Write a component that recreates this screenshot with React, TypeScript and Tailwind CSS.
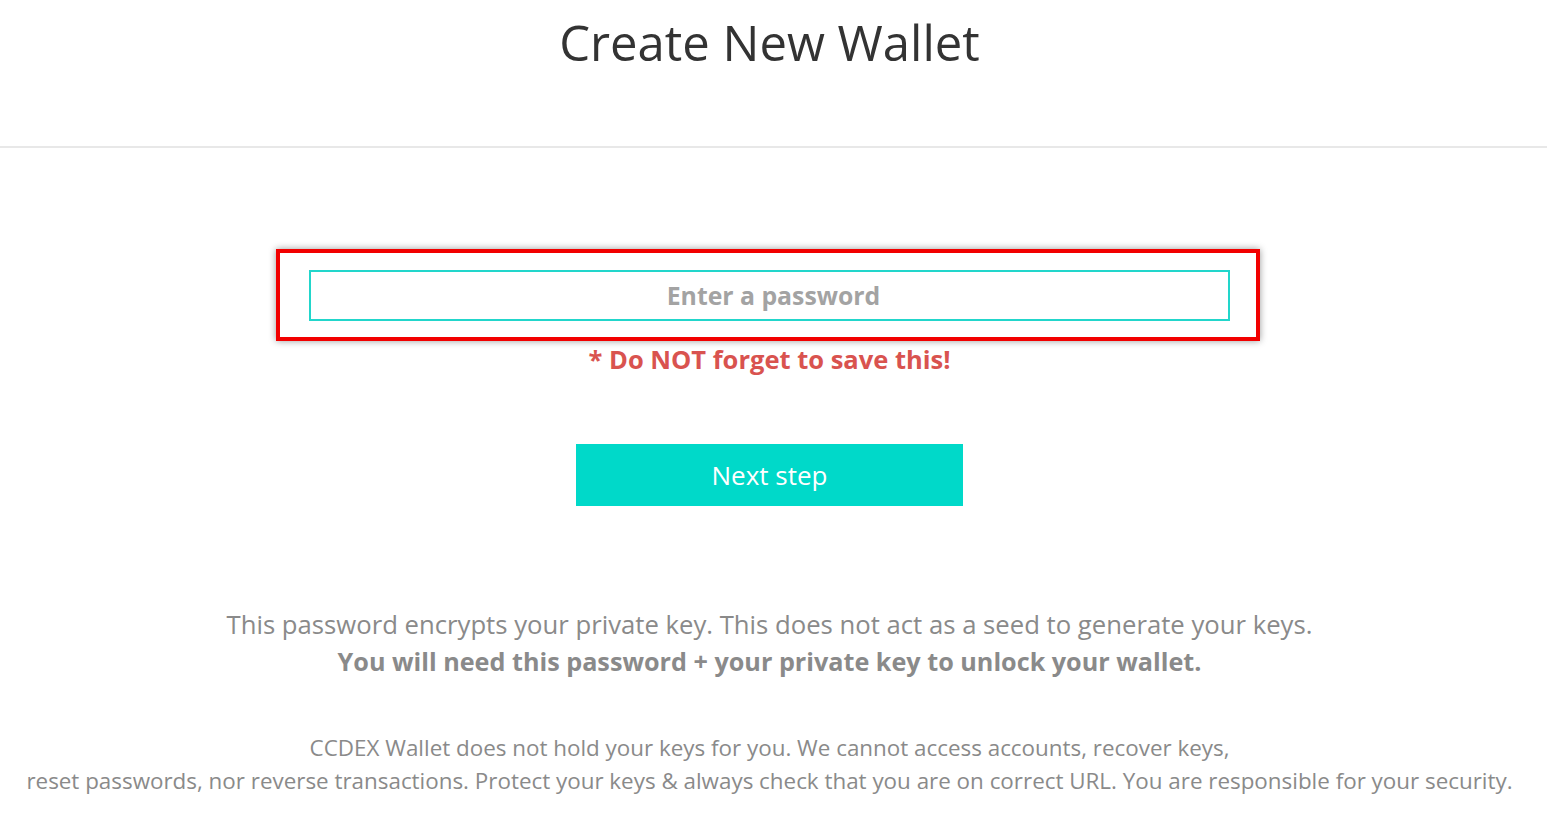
import React from 'react';

export default function App() {
  return (
    <div className="min-h-screen w-full bg-white text-center" style={{ fontFamily: '"Open Sans", "Noto Sans", sans-serif' }}>
      {/* Header */}
      <div className="h-[148px] border-b-2 border-[#e8e8e8] pt-[10px] pr-[8px]">
        <h1 className="text-[49px] leading-[64px] text-[#333333]">Create New Wallet</h1>
      </div>

      {/* Password */}
      <div className="mt-[101px] pr-[8px] flex flex-col items-center">
        <div className="mr-[4px] w-[984px] h-[92px] border-[4px] border-[#f20000] shadow-[0_0_7px_rgba(0,0,0,0.4)] flex items-center justify-center">
          <input
            type="password"
            placeholder="Enter a password"
            className="ml-[4px] pl-[8px] w-[921px] h-[51px] border-2 border-[#22d6cb] bg-white text-center text-[24.8px] font-bold text-[#555] placeholder:text-[#a3a3a3] outline-none"
          />
        </div>
        <p className="mt-[1px] text-[25.5px] leading-[34px] font-bold text-[#d9534f]">* Do NOT forget to save this!</p>

        <button className="mt-[68px] w-[387px] h-[62px] bg-[#00d9c9] text-white text-[26px]">Next step</button>
      </div>

      {/* Info */}
      <div className="mt-[100px] pr-[8px] text-[#8a8a8a]">
        <p className="text-[25.7px] leading-[37px]">This password encrypts your private key. This does not act as a seed to generate your keys.</p>
        <p className="text-[25.2px] leading-[37px] font-bold">You will need this password + your private key to unlock your wallet.</p>
      </div>

      <div className="mt-[51px] pr-[8px] text-[#8a8a8a] text-[22.4px] leading-[33px]">
        <p>CCDEX Wallet does not hold your keys for you. We cannot access accounts, recover keys,</p>
        <p>reset passwords, nor reverse transactions. Protect your keys &amp; always check that you are on correct URL. You are responsible for your security.</p>
      </div>
    </div>
  );
}
